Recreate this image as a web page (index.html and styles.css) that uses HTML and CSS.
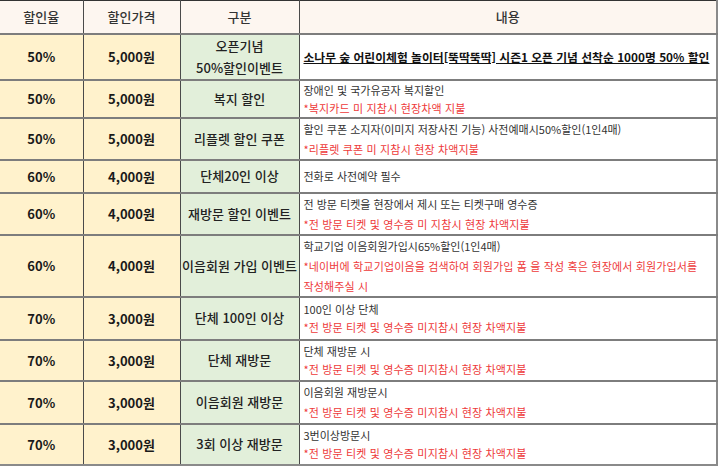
FILE: index.html
```html
<!DOCTYPE html>
<html lang="ko">
<head>
<meta charset="utf-8">
<link rel="stylesheet" href="styles.css">
</head>
<body>
<table class="price">
  <colgroup>
    <col class="c-rate"><col class="c-price"><col class="c-type"><col class="c-desc">
  </colgroup>
  <thead>
    <tr class="h-head">
      <th>할인율</th><th>할인가격</th><th>구분</th><th>내용</th>
    </tr>
  </thead>
  <tbody>
    <tr class="h1">
      <td class="num">50%</td><td class="num">5,000원</td>
      <td class="type">오픈기념<br>50%할인이벤트</td>
      <td class="desc"><span class="lead">소나무 숲 어린이체험 놀이터[뚝딱뚝딱] 시즌1 오픈 기념 선착순 1000명 50% 할인</span></td>
    </tr>
    <tr class="h2">
      <td class="num">50%</td><td class="num">5,000원</td>
      <td class="type">복지 할인</td>
      <td class="desc">장애인 및 국가유공자 복지할인<br><span class="red">*복지카드 미 지참시 현장차액 지불</span></td>
    </tr>
    <tr class="h3">
      <td class="num">50%</td><td class="num">5,000원</td>
      <td class="type">리플렛 할인 쿠폰</td>
      <td class="desc wide">할인 쿠폰 소지자(이미지 저장사진 기능) 사전예매시50%할인(1인4매)<br><span class="red">*리플렛 쿠폰 미 지참시 현장 차액지불</span></td>
    </tr>
    <tr class="h4">
      <td class="num">60%</td><td class="num">4,000원</td>
      <td class="type">단체20인 이상</td>
      <td class="desc">전화로 사전예약 필수</td>
    </tr>
    <tr class="h5">
      <td class="num">60%</td><td class="num">4,000원</td>
      <td class="type">재방문 할인 이벤트</td>
      <td class="desc wide">전 방문 티켓을 현장에서 제시 또는 티켓구매 영수증<br><span class="red">*전 방문 티켓 및 영수증 미 지참시 현장 차액지불</span></td>
    </tr>
    <tr class="h6">
      <td class="num">60%</td><td class="num">4,000원</td>
      <td class="type">이음회원 가입 이벤트</td>
      <td class="desc wide">학교기업 이음회원가입시65%할인(1인4매)<br><span class="red">*네이버에 학교기업이음을 검색하여 회원가입 폼 을 작성 혹은 현장에서 회원가입서를<br>작성해주실 시</span></td>
    </tr>
    <tr class="h7">
      <td class="num">70%</td><td class="num">3,000원</td>
      <td class="type">단체 100인 이상</td>
      <td class="desc">100인 이상 단체<br><span class="red">*전 방문 티켓 및 영수증 미지참시 현장 차액지불</span></td>
    </tr>
    <tr class="h8">
      <td class="num">70%</td><td class="num">3,000원</td>
      <td class="type">단체 재방문</td>
      <td class="desc">단체 재방문 시<br><span class="red">*전 방문 티켓 및 영수증 미지참시 현장 차액지불</span></td>
    </tr>
    <tr class="h9">
      <td class="num">70%</td><td class="num">3,000원</td>
      <td class="type">이음회원 재방문</td>
      <td class="desc wide">이음회원 재방문시<br><span class="red">*전 방문 티켓 및 영수증 미지참시 현장 차액지불</span></td>
    </tr>
    <tr class="h10">
      <td class="num">70%</td><td class="num">3,000원</td>
      <td class="type">3회 이상 재방문</td>
      <td class="desc">3번이상방문시<br><span class="red">*전 방문 티켓 및 영수증 미지참시 현장 차액지불</span></td>
    </tr>
  </tbody>
</table>
</body>
</html>
```

FILE: styles.css
```css
html, body {
  margin: 0;
  padding: 0;
  background: #ffffff;
}
body {
  font-family: "Noto Sans CJK KR", "Noto Sans", sans-serif;
  color: #222;
}
.price {
  width: 718px;
  table-layout: fixed;
  border-collapse: collapse;
  border-top: 1px solid #333;
  border-right: 2px solid #8a8a8a;
  border-bottom: 2px solid #8a8a8a;
}
.c-rate { width: 83px; }
.c-price { width: 97px; }
.c-type { width: 119px; }
.c-desc { width: auto; }

.price th, .price td {
  padding: 0;
  border-top: 2px solid #7d7d7d;
  border-left: 1px solid #4a4a4a;
  text-align: center;
  vertical-align: middle;
}
.price th:first-child, .price td:first-child {
  border-left: none;
}
.price th {
  background: #fdf6f0;
  font-size: 13px;
  font-weight: 500;
  color: #333;
  border-top: none;
}
.num {
  background: #fff2cc;
  font-size: 13px;
  font-weight: 700;
  color: #1a1a1a;
}
.type {
  background: #e2efda;
  font-size: 13px;
  font-weight: 500;
  color: #222;
  line-height: 22px;
}
.desc {
  background: #fff;
  text-align: left !important;
  padding-left: 4px !important;
  padding-right: 2px !important;
  font-size: 11px;
  line-height: 18px;
  color: #333;
  white-space: nowrap;
}
.desc.wide {
  line-height: 20px;
}
.lead {
  font-size: 11.8px;
  font-weight: 700;
  color: #111;
  text-decoration: underline;
}
.red {
  color: #ee3a3a;
  letter-spacing: 0.15px;
}
.h-head { height: 33px; }
.h1 { height: 45px; }
.h2 { height: 38px; }
.h3 { height: 42px; }
.h4 { height: 33px; }
.h5 { height: 42px; }
.h6 { height: 61px; }
.h7 { height: 43px; }
.h8 { height: 41px; }
.h9 { height: 43px; }
.h10 { height: 41px; }
```
